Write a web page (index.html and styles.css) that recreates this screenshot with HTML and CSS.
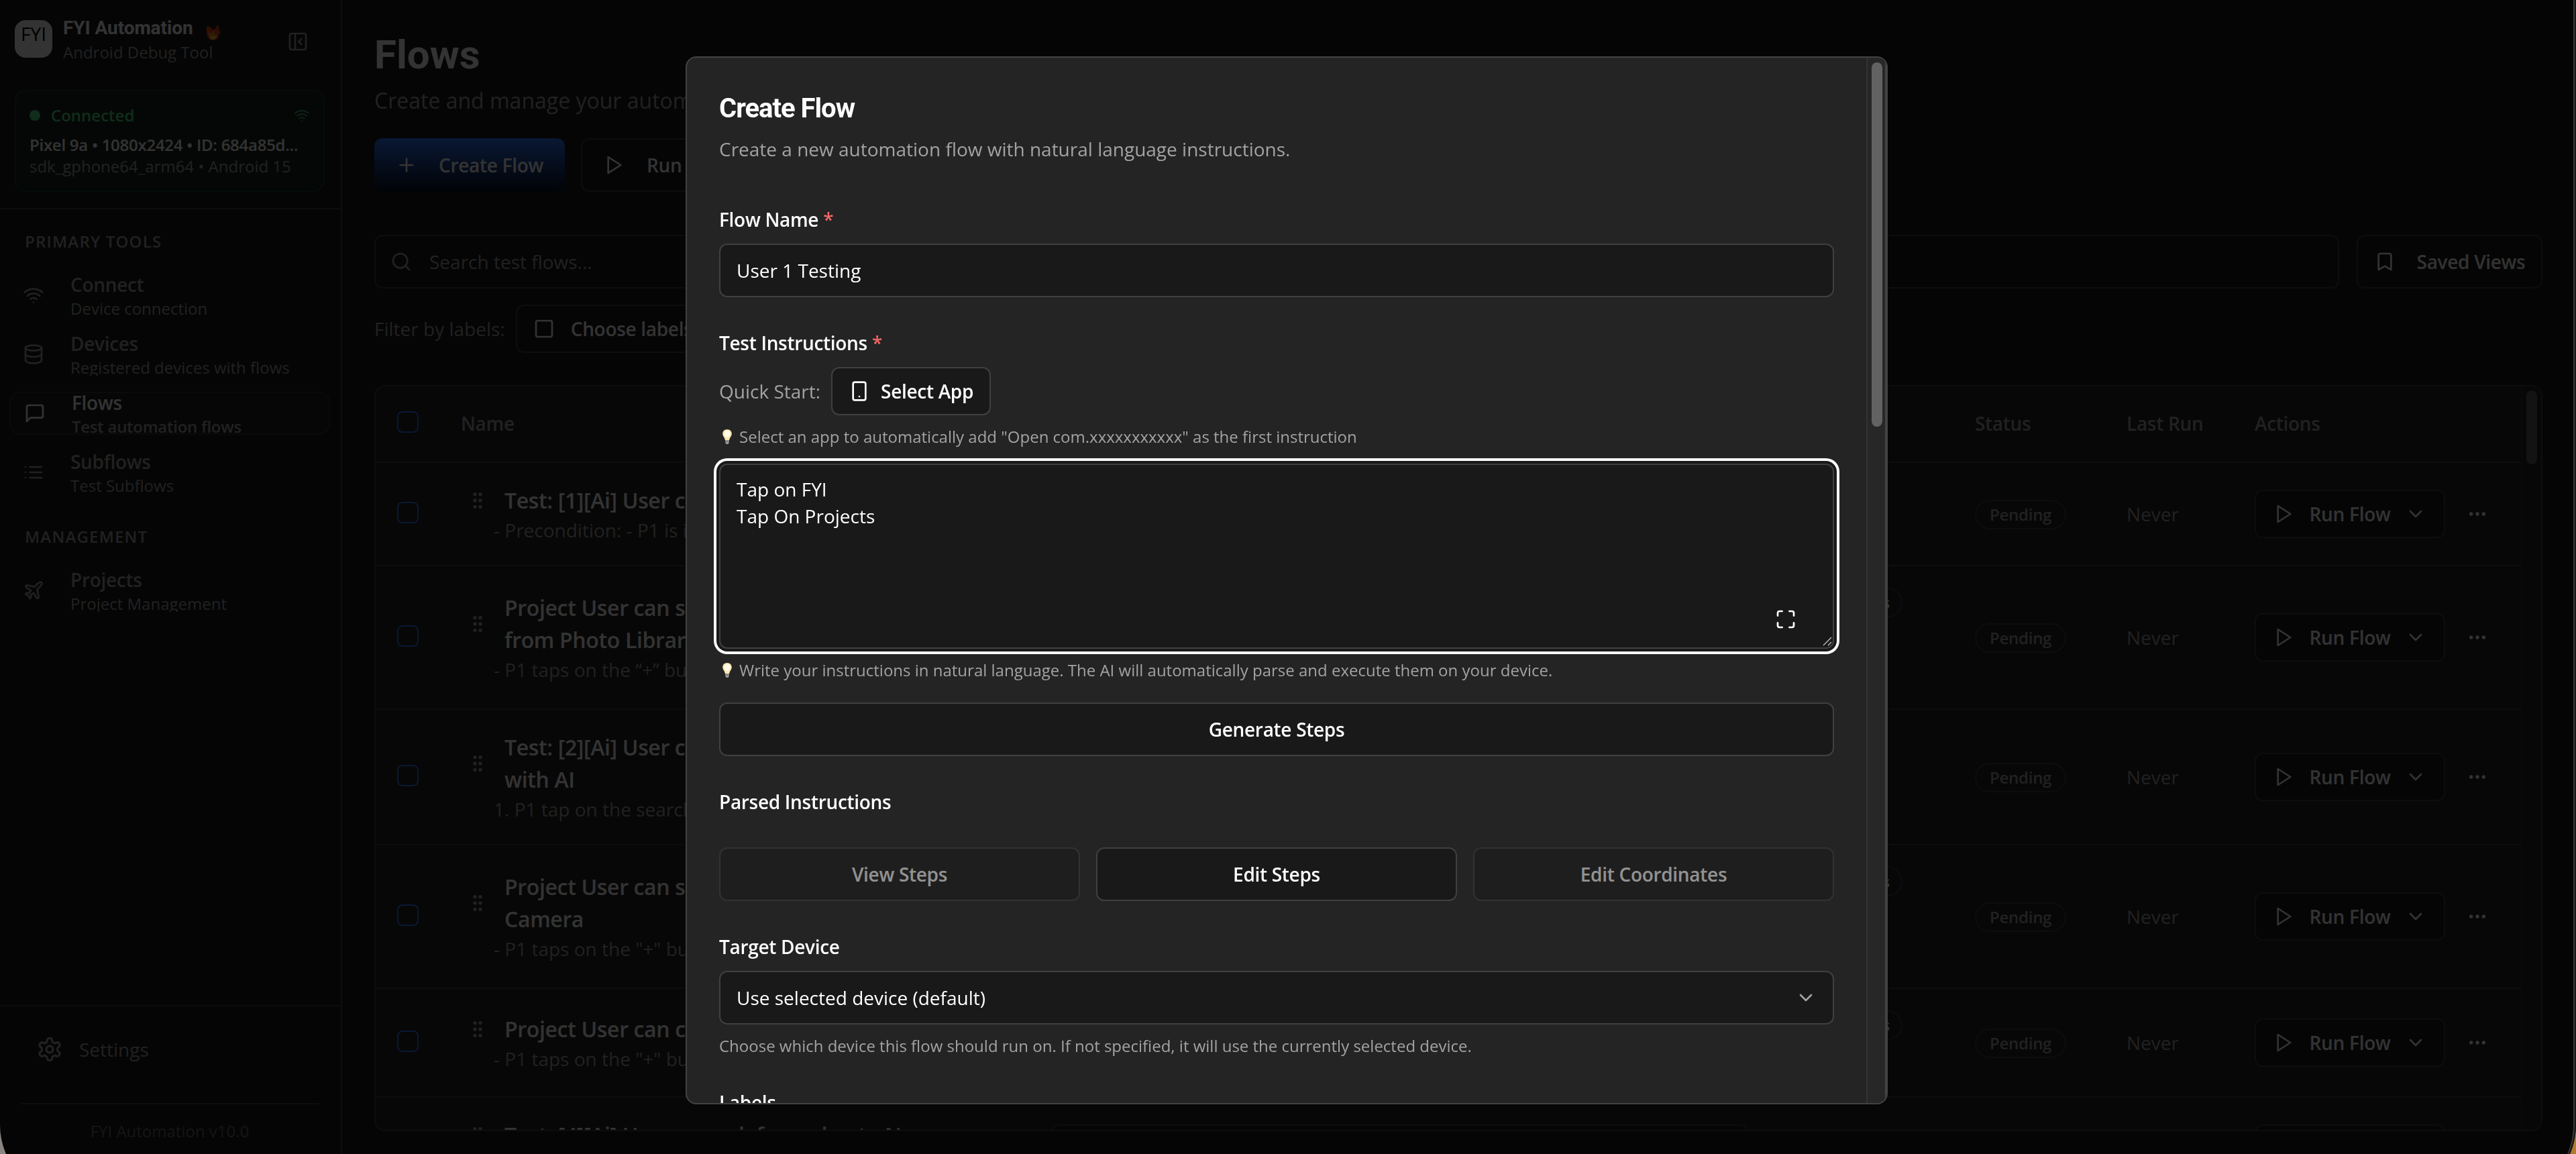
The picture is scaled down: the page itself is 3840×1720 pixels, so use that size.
FILE: index.html
```html
<!DOCTYPE html>
<html lang="en">
<head>
    <meta charset="UTF-8">
    <meta name="viewport" content="width=device-width, initial-scale=1.0">
    <title>FYI Automation - Flows</title>
    <link rel="stylesheet" href="styles.css">
</head>
<body>

<!-- Icon sprite -->
<svg class="sprite" xmlns="http://www.w3.org/2000/svg">
    <symbol id="i-wifi" viewBox="0 0 24 24"><path d="M12 20h.01"/><path d="M2 8.82a15 15 0 0 1 20 0"/><path d="M5 12.859a10 10 0 0 1 14 0"/><path d="M8.5 16.429a5 5 0 0 1 7 0"/></symbol>
    <symbol id="i-panel" viewBox="0 0 24 24"><rect width="18" height="18" x="3" y="3" rx="2"/><path d="M9 3v18"/><path d="m16 15-3-3 3-3"/></symbol>
    <symbol id="i-database" viewBox="0 0 24 24"><ellipse cx="12" cy="5" rx="9" ry="3"/><path d="M3 5V19A9 3 0 0 0 21 19V5"/><path d="M3 12A9 3 0 0 0 21 12"/></symbol>
    <symbol id="i-message" viewBox="0 0 24 24"><path d="M21 15a2 2 0 0 1-2 2H7l-4 4V5a2 2 0 0 1 2-2h14a2 2 0 0 1 2 2z"/></symbol>
    <symbol id="i-list" viewBox="0 0 24 24"><path d="M3 12h.01"/><path d="M3 18h.01"/><path d="M3 6h.01"/><path d="M8 12h13"/><path d="M8 18h13"/><path d="M8 6h13"/></symbol>
    <symbol id="i-plane" viewBox="0 0 24 24"><path d="M17.8 19.2 16 11l3.5-3.5C21 6 21.5 4 21 3c-1-.5-3 0-4.5 1.5L13 8 4.8 6.2c-.5-.1-.9.1-1.1.5l-.3.5c-.2.5-.1 1 .3 1.3L9 12l-2 3H4l-1 1 3 2 2 3 1-1v-3l3-2 3.500 5.300c.3.4.8.5 1.300.3l.5-.2c.4-.3.6-.7.5-1.200z"/></symbol>
    <symbol id="i-settings" viewBox="0 0 24 24"><path d="M12.22 2h-.44a2 2 0 0 0-2 2v.18a2 2 0 0 1-1 1.73l-.43.25a2 2 0 0 1-2 0l-.15-.08a2 2 0 0 0-2.73.73l-.22.38a2 2 0 0 0 .73 2.73l.15.1a2 2 0 0 1 1 1.72v.51a2 2 0 0 1-1 1.74l-.15.09a2 2 0 0 0-.73 2.73l.22.38a2 2 0 0 0 2.73.73l.15-.08a2 2 0 0 1 2 0l.43.25a2 2 0 0 1 1 1.73V20a2 2 0 0 0 2 2h.44a2 2 0 0 0 2-2v-.18a2 2 0 0 1 1-1.73l.43-.25a2 2 0 0 1 2 0l.15.08a2 2 0 0 0 2.73-.73l.22-.39a2 2 0 0 0-.73-2.73l-.15-.08a2 2 0 0 1-1-1.74v-.5a2 2 0 0 1 1-1.74l.15-.09a2 2 0 0 0 .73-2.73l-.22-.38a2 2 0 0 0-2.73-.73l-.15.08a2 2 0 0 1-2 0l-.43-.25a2 2 0 0 1-1-1.73V4a2 2 0 0 0-2-2z"/><circle cx="12" cy="12" r="3"/></symbol>
    <symbol id="i-plus" viewBox="0 0 24 24"><path d="M5 12h14"/><path d="M12 5v14"/></symbol>
    <symbol id="i-play" viewBox="0 0 24 24"><path d="M5 3l14 9-14 9z"/></symbol>
    <symbol id="i-search" viewBox="0 0 24 24"><circle cx="11" cy="11" r="8"/><path d="m21 21-4.3-4.3"/></symbol>
    <symbol id="i-bookmark" viewBox="0 0 24 24"><path d="m19 21-7-4-7 4V5a2 2 0 0 1 2-2h10a2 2 0 0 1 2 2z"/></symbol>
    <symbol id="i-square" viewBox="0 0 24 24"><rect width="18" height="18" x="3" y="3" rx="2"/></symbol>
    <symbol id="i-grip" viewBox="0 0 24 24"><circle cx="9" cy="12" r="1"/><circle cx="9" cy="5" r="1"/><circle cx="9" cy="19" r="1"/><circle cx="15" cy="12" r="1"/><circle cx="15" cy="5" r="1"/><circle cx="15" cy="19" r="1"/></symbol>
    <symbol id="i-chevron" viewBox="0 0 24 24"><path d="m6 9 6 6 6-6"/></symbol>
    <symbol id="i-dots" viewBox="0 0 24 24"><circle cx="12" cy="12" r="1"/><circle cx="19" cy="12" r="1"/><circle cx="5" cy="12" r="1"/></symbol>
    <symbol id="i-phone" viewBox="0 0 24 24"><rect width="14" height="20" x="5" y="2" rx="2"/><path d="M12 18h.01"/></symbol>
    <symbol id="i-expand" viewBox="0 0 24 24"><path d="M8 3H5a2 2 0 0 0-2 2v3"/><path d="M21 8V5a2 2 0 0 0-2-2h-3"/><path d="M3 16v3a2 2 0 0 0 2 2h3"/><path d="M16 21h3a2 2 0 0 0 2-2v-3"/></symbol>
    <symbol id="i-bulb" viewBox="0 0 16 24">
        <path d="M8 1C4 1 1.200 3.800 1.200 7.600c0 2.700 1.500 4.200 2.500 6 .7 1.400 1 2.400 1.300 3.600h6c.3-1.200.6-2.200 1.300-3.600 1-1.800 2.500-3.300 2.500-6C14.800 3.800 12 1 8 1z" fill="#fbe6ad" stroke="none"/>
        <ellipse cx="8" cy="7.500" rx="4.600" ry="5.200" fill="#fffbea" stroke="none"/>
        <path d="M5.200 17.200h5.600v3.600L9.300 23H6.700l-1.500-2.200z" fill="#9b9b9b" stroke="none"/>
        <path d="M5.200 19.200h5.600" stroke="#6a6a6a" stroke-width="1"/>
    </symbol>
    <symbol id="i-fire" viewBox="0 0 22 25">
        <path d="M3 2c-2 2-3 5-2.500 8C1 15 2 24 10.500 24 17 24 19 20 19 16c2.500-2 3-5 2-8-.5 1.500-1.500 2-2.500 1.500C20 7 20 3 16 1c.5 3-1.500 5-4 7-2 1-3 0-3-1C9 5 5 5 3 2z" fill="#dc3c18" stroke="none"/>
        <path d="M4 9c-1 7 1 14 6.500 14 5 0 7-4 5.500-9-1 2-2 2-3 1-1.500-1-1-3 0-5-4 1-4 4-5 4-2 0-2-3-4-5z" fill="#e8912a" stroke="none"/>
        <path d="M6 17c0 4 2 6 4.500 6s4.500-2 4-5c-2 1-3 0-4-1-1 2-3 2-4.500 0z" fill="#f4d22c" stroke="none"/>
    </symbol>
</svg>

<div class="app">
    <aside class="sidebar">
        <div class="sidebar-header">
            <div class="brand">
                <div class="logo">FYI</div>
                <div class="brand-text">
                    <div class="brand-name">FYI Automation <svg class="fire"><use href="#i-fire"/></svg></div>
                    <div class="brand-sub">Android Debug Tool</div>
                </div>
                <svg class="icon collapse"><use href="#i-panel"/></svg>
            </div>
            <div class="device">
                <div class="device-status">
                    <span class="dot"></span>
                    <span>Connected</span>
                    <svg class="icon"><use href="#i-wifi"/></svg>
                </div>
                <div class="device-name">Pixel 9a • 1080x2424 • ID: 684a85d...</div>
                <div class="device-os">sdk_gphone64_arm64 • Android 15</div>
            </div>
        </div>

        <nav class="nav">
            <div class="nav-title">PRIMARY TOOLS</div>
            <div class="nav-group">
                <div class="nav-item">
                    <svg class="icon"><use href="#i-wifi"/></svg>
                    <div><div class="nav-name">Connect</div><div class="nav-desc">Device connection</div></div>
                </div>
                <div class="nav-item">
                    <svg class="icon"><use href="#i-database"/></svg>
                    <div><div class="nav-name">Devices</div><div class="nav-desc">Registered devices with flows</div></div>
                </div>
                <div class="nav-item active">
                    <svg class="icon"><use href="#i-message"/></svg>
                    <div><div class="nav-name">Flows</div><div class="nav-desc">Test automation flows</div></div>
                </div>
                <div class="nav-item">
                    <svg class="icon"><use href="#i-list"/></svg>
                    <div><div class="nav-name">Subflows</div><div class="nav-desc">Test Subflows</div></div>
                </div>
            </div>
            <div class="nav-title">MANAGEMENT</div>
            <div class="nav-group">
                <div class="nav-item">
                    <svg class="icon"><use href="#i-plane"/></svg>
                    <div><div class="nav-name">Projects</div><div class="nav-desc">Project Management</div></div>
                </div>
            </div>
        </nav>

        <div class="sidebar-footer">
            <div class="settings">
                <svg class="icon"><use href="#i-settings"/></svg>
                <span>Settings</span>
            </div>
            <div class="version">FYI Automation v10.0</div>
        </div>
    </aside>

    <main class="main">
        <h1>Flows</h1>
        <p class="subtitle">Create and manage your automation flows</p>

        <div class="toolbar">
            <button class="btn btn-primary"><svg class="icon"><use href="#i-plus"/></svg>Create Flow</button>
            <button class="btn btn-wide"><svg class="icon"><use href="#i-play"/></svg>Run Flows</button>
        </div>

        <div class="search-row">
            <div class="search"><svg class="icon"><use href="#i-search"/></svg>Search test flows...</div>
            <button class="btn btn-wide saved"><svg class="icon"><use href="#i-bookmark"/></svg>Saved Views</button>
        </div>

        <div class="filters">
            <span>Filter by labels:</span>
            <button class="btn btn-filter"><svg class="icon"><use href="#i-square"/></svg>Choose labels</button>
        </div>

        <div class="table">
            <div class="table-body">
                <div class="row head">
                    <span class="check"></span>
                    <span>Name</span>
                    <span></span>
                    <span>Status</span>
                    <span>Last Run</span>
                    <span>Actions</span>
                </div>

                <div class="row">
                    <span class="check"></span>
                    <div class="flow">
                        <div class="flow-title"><svg class="icon"><use href="#i-grip"/></svg><span>Test: [1][Ai] User can search</span></div>
                        <div class="flow-desc">- Precondition: - P1 is in the app</div>
                    </div>
                    <div class="labels"></div>
                    <div><span class="pill">Pending</span></div>
                    <span class="last-run">Never</span>
                    <div class="actions">
                        <button class="btn btn-run"><svg class="icon"><use href="#i-play"/></svg>Run Flow<svg class="icon"><use href="#i-chevron"/></svg></button>
                        <svg class="icon"><use href="#i-dots"/></svg>
                    </div>
                </div>

                <div class="row">
                    <span class="check"></span>
                    <div class="flow">
                        <div class="flow-title"><svg class="icon"><use href="#i-grip"/></svg><span>Project User can send a photo<br>from Photo Library</span></div>
                        <div class="flow-desc">- P1 taps on the “+” button</div>
                    </div>
                    <div class="labels"><span class="pill">Projects</span><span class="pill">Chat</span><span class="pill">Photo</span></div>
                    <div><span class="pill">Pending</span></div>
                    <span class="last-run">Never</span>
                    <div class="actions">
                        <button class="btn btn-run"><svg class="icon"><use href="#i-play"/></svg>Run Flow<svg class="icon"><use href="#i-chevron"/></svg></button>
                        <svg class="icon"><use href="#i-dots"/></svg>
                    </div>
                </div>

                <div class="row">
                    <span class="check"></span>
                    <div class="flow">
                        <div class="flow-title"><svg class="icon"><use href="#i-grip"/></svg><span>Test: [2][Ai] User can search<br>with AI</span></div>
                        <div class="flow-desc">1. P1 tap on the search bar</div>
                    </div>
                    <div class="labels"></div>
                    <div><span class="pill">Pending</span></div>
                    <span class="last-run">Never</span>
                    <div class="actions">
                        <button class="btn btn-run"><svg class="icon"><use href="#i-play"/></svg>Run Flow<svg class="icon"><use href="#i-chevron"/></svg></button>
                        <svg class="icon"><use href="#i-dots"/></svg>
                    </div>
                </div>

                <div class="row">
                    <span class="check"></span>
                    <div class="flow">
                        <div class="flow-title"><svg class="icon"><use href="#i-grip"/></svg><span>Project User can send from<br>Camera</span></div>
                        <div class="flow-desc">- P1 taps on the "+" button</div>
                    </div>
                    <div class="labels"><span class="pill">Projects</span><span class="pill">Chat</span><span class="pill">Photo</span></div>
                    <div><span class="pill">Pending</span></div>
                    <span class="last-run">Never</span>
                    <div class="actions">
                        <button class="btn btn-run"><svg class="icon"><use href="#i-play"/></svg>Run Flow<svg class="icon"><use href="#i-chevron"/></svg></button>
                        <svg class="icon"><use href="#i-dots"/></svg>
                    </div>
                </div>

                <div class="row">
                    <span class="check"></span>
                    <div class="flow">
                        <div class="flow-title"><svg class="icon"><use href="#i-grip"/></svg><span>Project User can create</span></div>
                        <div class="flow-desc">- P1 taps on the "+" button</div>
                    </div>
                    <div class="labels"><span class="pill">Projects</span><span class="pill">Chat</span></div>
                    <div><span class="pill">Pending</span></div>
                    <span class="last-run">Never</span>
                    <div class="actions">
                        <button class="btn btn-run"><svg class="icon"><use href="#i-play"/></svg>Run Flow<svg class="icon"><use href="#i-chevron"/></svg></button>
                        <svg class="icon"><use href="#i-dots"/></svg>
                    </div>
                </div>

                <div class="row">
                    <span class="check"></span>
                    <div class="flow flow-split">
                        <div>
                            <div class="flow-title"><svg class="icon"><use href="#i-grip"/></svg><span>Test: [4][Ai] User can ask for a plan to N</span></div>
                            <div class="flow-desc">- Precondition: - P1 is in the app</div>
                        </div>
                        <div class="flow-box"></div>
                    </div>
                    <div class="labels"></div>
                    <div><span class="pill">Pending</span></div>
                    <span class="last-run">Never</span>
                    <div class="actions">
                        <button class="btn btn-run"><svg class="icon"><use href="#i-play"/></svg>Run Flow<svg class="icon"><use href="#i-chevron"/></svg></button>
                        <svg class="icon"><use href="#i-dots"/></svg>
                    </div>
                </div>
            </div>
            <div class="table-scroll"><div class="table-thumb"></div></div>
        </div>
    </main>
</div>

<div class="overlay">
    <div class="modal">
        <div class="modal-body">
            <h2>Create Flow</h2>
            <p class="modal-desc">Create a new automation flow with natural language instructions.</p>

            <div class="label first">Flow Name <span class="req">*</span></div>
            <div class="field">User 1 Testing</div>

            <div class="label">Test Instructions <span class="req">*</span></div>
            <div class="quick">
                <span>Quick Start:</span>
                <button class="btn btn-app"><svg class="icon"><use href="#i-phone"/></svg>Select App</button>
            </div>
            <p class="hint"><svg class="bulb"><use href="#i-bulb"/></svg>Select an app to automatically add "Open com.xxxxxxxxxxx" as the first instruction</p>
            <div class="editor">
                <div>Tap on FYI</div>
                <div>Tap On Projects</div>
                <svg class="icon expand"><use href="#i-expand"/></svg>
                <svg class="grip" viewBox="0 0 14 14"><path d="M1 13 13 1M8 13l5-5"/></svg>
            </div>
            <p class="hint"><svg class="bulb"><use href="#i-bulb"/></svg>Write your instructions in natural language. The AI will automatically parse and execute them on your device.</p>
            <button class="btn btn-generate">Generate Steps</button>

            <div class="label">Parsed Instructions</div>
            <div class="tabs">
                <button class="btn disabled">View Steps</button>
                <button class="btn">Edit Steps</button>
                <button class="btn disabled">Edit Coordinates</button>
            </div>

            <div class="label">Target Device</div>
            <div class="field select">Use selected device (default)<svg class="icon"><use href="#i-chevron"/></svg></div>
            <p class="hint">Choose which device this flow should run on. If not specified, it will use the currently selected device.</p>

            <div class="label">Labels</div>
        </div>
        <div class="modal-scroll"><div class="modal-thumb"></div></div>
    </div>
</div>

<div class="window-frame"></div>

</body>
</html>
```

FILE: styles.css
```css
* {
    box-sizing: border-box;
}
body {
    margin: 0;
    width: 3840px;
    height: 1720px;
    overflow: hidden;
    background: #191919;
    color: #fff;
    font-family: "Open Sans", sans-serif;
    font-size: 28px;
    line-height: 40px;
}
h1, h2, p {
    margin: 0;
}
.sprite {
    display: none;
}
.icon {
    width: 32px;
    height: 32px;
    flex-shrink: 0;
    fill: none;
    stroke: currentColor;
    stroke-width: 2;
    stroke-linecap: round;
    stroke-linejoin: round;
}
.app {
    display: flex;
    height: 1720px;
}

/* Medium weight text */
.btn,
.label,
.head,
.pill,
.flow-title,
.nav-name,
.active .nav-desc,
.device-name {
    font-weight: 600;
    letter-spacing: -0.011em;
}

/* Sidebar */
.sidebar {
    display: flex;
    flex-direction: column;
    width: 510px;
    flex-shrink: 0;
    border-right: 2px solid #404040;
}
.sidebar-header {
    height: 312px;
    padding: 22px 24px 0 22px;
    border-bottom: 2px solid #404040;
}
.brand {
    display: flex;
    align-items: center;
}
.logo {
    width: 56px;
    height: 56px;
    border-radius: 16px;
    background: #fff;
    color: #000;
    text-align: center;
}
.brand-text {
    flex: 1;
    margin-left: 16px;
    white-space: nowrap;
}
.brand-name {
    display: flex;
    align-items: center;
    font-family: Roboto, sans-serif;
    font-weight: 700;
    letter-spacing: -0.003em;
}
.fire {
    width: 22px;
    height: 25px;
    margin: 12px 0 0 19px;
}
.brand-sub {
    font-size: 24px;
    line-height: 32px;
    color: #a3a3a3;
}
.collapse {
    margin: 8px 24px 0 0;
    color: #a3a3a3;
}
.device {
    margin-top: 40px;
    height: 152px;
    padding: 20px;
    border: 2px solid #1c4429;
    border-radius: 16px;
    background: #1c2620;
    font-size: 24px;
    line-height: 32px;
    white-space: nowrap;
}
.device-status {
    display: flex;
    align-items: center;
    gap: 16px;
    margin-bottom: 12px;
    color: #4ade80;
    font-weight: 600;
}
.device-status .icon {
    width: 24px;
    height: 24px;
    margin-left: auto;
    opacity: 0.75;
}
.dot {
    width: 16px;
    height: 16px;
    border-radius: 50%;
    background: #4ade80;
}
.device-os {
    color: #a3a3a3;
}
.nav {
    flex: 1;
    padding: 0 16px 0 14px;
    color: #a3a3a3;
}
.nav-title {
    margin: 32px 0 32px 23px;
    font-size: 24px;
    line-height: 32px;
    font-weight: 600;
    letter-spacing: 0.05em;
}
.nav-group {
    display: flex;
    flex-direction: column;
    gap: 24px;
}
.nav-group + .nav-title {
    margin-top: 48px;
}
.nav-item {
    display: flex;
    align-items: center;
    gap: 39px;
    height: 64px;
    padding: 0 20px;
    overflow: hidden;
    white-space: nowrap;
}
.nav-item.active {
    border: 2px solid #333;
    border-radius: 16px;
    background: #202020;
    color: #fff;
}
.nav-desc {
    font-size: 24px;
    line-height: 32px;
    color: #a3a3a3;
}
.sidebar-footer {
    height: 222px;
    border-top: 2px solid #404040;
    padding: 24px 32px 0 30px;
    color: #a3a3a3;
}
.settings {
    display: flex;
    align-items: center;
    gap: 24px;
    height: 80px;
    padding-left: 24px;
}
.settings .icon {
    width: 40px;
    height: 40px;
}
.version {
    margin-top: 40px;
    padding-top: 24px;
    border-top: 2px solid #404040;
    font-size: 24px;
    line-height: 32px;
    text-align: center;
    color: #6b6b6b;
}

/* Main */
.main {
    flex: 1;
    padding: 46px 50px 0 48px;
    min-width: 0;
}
h1 {
    font-family: Roboto, sans-serif;
    font-size: 60px;
    line-height: 72px;
    font-weight: 700;
}
.subtitle {
    margin-top: 8px;
    font-size: 32px;
    line-height: 48px;
    color: #a3a3a3;
}
.btn {
    display: flex;
    align-items: center;
    justify-content: center;
    height: 80px;
    padding: 0 32px;
    border: 2px solid #404040;
    border-radius: 12px;
    background: #191919;
    color: #fff;
    font-family: inherit;
    font-size: 28px;
    line-height: 40px;
    white-space: nowrap;
}
.toolbar {
    display: flex;
    gap: 24px;
    margin-top: 32px;
}
.btn-primary {
    width: 284px;
    gap: 32px;
    border: none;
    background: linear-gradient(#3278ff, #05101f);
}
.btn-wide {
    gap: 32px;
}
.search-row {
    display: flex;
    gap: 26px;
    margin-top: 64px;
}
.search {
    display: flex;
    align-items: center;
    gap: 26px;
    flex: 1;
    height: 80px;
    padding-left: 22px;
    border: 2px solid #404040;
    border-radius: 12px;
    color: #a3a3a3;
}
.saved {
    width: 277px;
    padding: 0;
}
.filters {
    display: flex;
    align-items: center;
    gap: 16px;
    margin-top: 24px;
    color: #a3a3a3;
}
.btn-filter {
    height: 72px;
    padding: 0 24px;
    gap: 24px;
}

/* Table */
.table {
    display: flex;
    height: 1112px;
    margin-top: 48px;
    border: 2px solid #404040;
    border-radius: 16px;
    background: #242424;
    overflow: hidden;
}
.table-body {
    flex: 1;
}
.table-scroll {
    width: 30px;
    padding: 6px;
    border-left: 2px solid #333;
    background: #272727;
}
.table-thumb {
    width: 16px;
    height: 110px;
    border-radius: 8px;
    background: #626262;
}
.row {
    display: grid;
    grid-template-columns: 127px 1954px 303px 226px 191px 1fr;
    align-items: center;
    padding: 32px 0;
    border-bottom: 2px solid #404040;
}
.head {
    height: 114px;
    padding: 0 0 2px;
    color: #a3a3a3;
}
.check {
    width: 32px;
    height: 32px;
    margin: 0 0 4px 32px;
    border: 2px solid #3278ff;
    border-radius: 8px;
}
.flow-title {
    display: flex;
    align-items: center;
    gap: 24px;
    margin-left: 9px;
    font-size: 32px;
    line-height: 48px;
}
.flow-title .icon {
    color: #a3a3a3;
}
.flow-desc {
    margin-left: 49px;
    color: #a3a3a3;
}
.flow-split {
    display: flex;
    align-items: center;
    justify-content: space-between;
}
.flow-box {
    width: 1039px;
    height: 72px;
    margin-right: 35px;
    border: 2px solid #404040;
    border-radius: 12px;
    background: #191919;
}
.labels {
    display: flex;
    flex-direction: column;
    align-items: flex-start;
    gap: 8px;
    justify-self: end;
    margin-right: 108px;
}
.pill {
    display: inline-block;
    height: 44px;
    padding: 0 20px;
    border: 2px solid #404040;
    border-radius: 22px;
    font-size: 24px;
    line-height: 40px;
    color: #a3a3a3;
    vertical-align: middle;
}
.labels .pill {
    padding: 0 17px;
    color: #fff;
}
.last-run {
    color: #a3a3a3;
}
.actions {
    display: flex;
    align-items: center;
    gap: 32px;
}
.btn-run {
    width: 284px;
    height: 72px;
    gap: 22px;
    padding: 0;
}

/* Create flow modal */
.overlay {
    position: fixed;
    top: 0;
    left: 0;
    width: 3836px;
    height: 1720px;
    display: flex;
    justify-content: center;
    align-items: flex-start;
    padding-top: 84px;
    background: rgba(0, 0, 0, 0.8);
}
.modal {
    display: flex;
    width: 1792px;
    height: 1562px;
    border: 2px solid #434343;
    border-radius: 16px;
    background: #242424;
    overflow: hidden;
}
.modal-body {
    flex: 1;
    padding: 48px;
    overflow: hidden;
}
.modal-scroll {
    width: 30px;
    padding: 7px 6px;
    border-left: 2px solid #333;
    border-right: 2px solid #434343;
    background: #272727;
}
.modal-thumb {
    width: 16px;
    height: 543px;
    border-radius: 8px;
    background: #626262;
}
h2 {
    font-family: Roboto, sans-serif;
    font-size: 40px;
    line-height: 56px;
    font-weight: 700;
    letter-spacing: -0.025em;
}
.modal-desc {
    margin-top: 12px;
    color: #a3a3a3;
}
.label {
    margin: 48px 0 16px;
}
.label.first {
    margin-top: 65px;
}
.req {
    color: #f46666;
}
.field {
    display: flex;
    align-items: center;
    height: 80px;
    padding: 0 24px;
    border: 2px solid #404040;
    border-radius: 12px;
    background: #191919;
}
.select {
    justify-content: space-between;
}
.select .icon {
    color: #a3a3a3;
}
.quick {
    display: flex;
    align-items: center;
    gap: 16px;
    color: #a3a3a3;
}
.btn-app {
    height: 72px;
    padding: 0 24px;
    gap: 16px;
}
.hint {
    display: flex;
    align-items: center;
    margin-top: 16px;
    font-size: 24px;
    line-height: 32px;
    color: #a3a3a3;
}
.bulb {
    width: 16px;
    height: 24px;
    margin: 0 10px 0 4px;
}
.editor {
    position: relative;
    height: 276px;
    margin-top: 24px;
    padding: 16px 24px;
    border: 2px solid #404040;
    border-radius: 12px;
    background: #191919;
    box-shadow: 0 0 0 4px #191919, 0 0 0 8px #fff;
}
.expand {
    position: absolute;
    right: 54px;
    bottom: 26px;
}
.grip {
    position: absolute;
    right: 1px;
    bottom: 2px;
    width: 14px;
    height: 14px;
    stroke: #b5b5b5;
    stroke-width: 1.5;
}
.btn-generate {
    width: 100%;
    margin-top: 32px;
}
.tabs {
    display: grid;
    grid-template-columns: repeat(3, 1fr);
    gap: 24px;
    margin-top: 48px;
}
.disabled {
    opacity: 0.5;
}

/* Rounded window edge with the desktop showing at the corners */
.window-frame {
    position: fixed;
    top: -120px;
    left: 0;
    width: 3840px;
    height: 1904px;
    border-right: 2px solid #1c1414;
    border-radius: 0 0 107px 107px;
    box-shadow: inset -2px 0 0 #3a3a3a, -40px 0 0 #8a8580, 40px 0 0 #b07a30;
}
```
